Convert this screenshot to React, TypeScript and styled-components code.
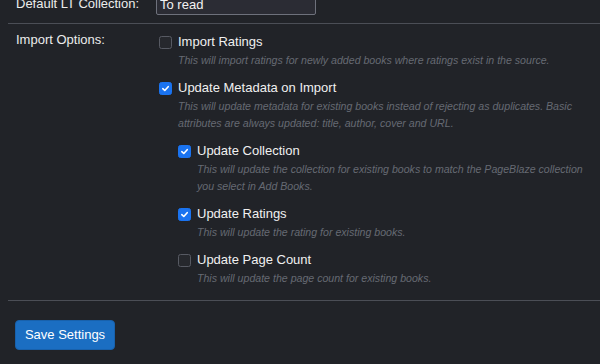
import React, { useState } from "react";
import styled, { createGlobalStyle } from "styled-components";

const Global = createGlobalStyle`
  html, body { margin: 0; padding: 0; background: #212328; overflow: hidden; }
  body { font-family: "Liberation Sans", Arial, sans-serif; color: #ececec; }
  * { box-sizing: border-box; }
`;

const Page = styled.div`
  width: 600px;
  height: 364px;
  overflow: hidden;
  background: #212328;
  padding-left: 8px;
`;

const Scroller = styled.div`
  margin-top: -15px;
`;

const Row = styled.div<{ $center?: boolean }>`
  display: grid;
  grid-template-columns: 140px 1fr;
  align-items: ${(p) => (p.$center ? "center" : "start")};
  padding: 8px 8px 8px 8px;
  border-bottom: 1px solid #4b4e56;
`;

const Label = styled.div`
  font-size: 13px;
  line-height: 16px;
  color: #ececec;
`;

const TextInput = styled.input`
  width: 160px;
  height: 22px;
  padding: 0 3px;
  background: #2b2c34;
  border: 1px solid #6e717c;
  border-radius: 2px;
  color: #f2f2f2;
  font-family: "Liberation Sans", Arial, sans-serif;
  font-size: 13px;
  outline: none;
`;

const Options = styled.div`
  display: flex;
  flex-direction: column;
  gap: 9.5px;
  padding: 0 0 5px 3px;
`;

const Nested = styled.div`
  display: flex;
  flex-direction: column;
  gap: 9.5px;
  padding-left: 19px;
`;

const Option = styled.div`
  display: flex;
  flex-direction: column;
`;

const TitleRow = styled.label`
  display: flex;
  align-items: center;
  gap: 6px;
  font-size: 13px;
  line-height: 20px;
  color: #f0f0f0;
  cursor: pointer;
`;

const Box = styled.span<{ $on: boolean }>`
  width: 13px;
  height: 13px;
  flex: none;
  border-radius: 2.5px;
  display: inline-flex;
  align-items: center;
  justify-content: center;
  background: ${(p) => (p.$on ? "#1a73f0" : "#26282d")};
  border: 1px solid ${(p) => (p.$on ? "#1a73f0" : "#575a63")};
`;

const Desc = styled.div`
  font-size: 10.6px;
  line-height: 16.7px;
  font-style: italic;
  color: #666a73;
  padding-left: 19px;
`;

const Footer = styled.div`
  padding: 19px 7px;
`;

const SaveButton = styled.button`
  width: 100px;
  height: 30px;
  background: #1b6ec2;
  border: 1px solid #1861ac;
  border-radius: 4px;
  color: #ffffff;
  font-family: "Liberation Sans", Arial, sans-serif;
  font-size: 13px;
  cursor: pointer;
`;

function Check({ on }: { on: boolean }) {
  return (
    <Box $on={on}>
      {on && (
        <svg width="9" height="9" viewBox="0 0 10 10">
          <path d="M2 5.2 L4.2 7.2 L8 3" fill="none" stroke="#fff" strokeWidth="1.8" strokeLinecap="round" strokeLinejoin="round" />
        </svg>
      )}
    </Box>
  );
}

function Opt({ title, desc, on, onToggle }: { title: string; desc: string; on: boolean; onToggle: () => void }) {
  return (
    <Option>
      <TitleRow onClick={onToggle}>
        <Check on={on} />
        <span>{title}</span>
      </TitleRow>
      <Desc>{desc}</Desc>
    </Option>
  );
}

export default function App() {
  const [s, setS] = useState({ ratings: false, meta: true, coll: true, urat: true, pages: false });
  const t = (k: keyof typeof s) => () => setS({ ...s, [k]: !s[k] });
  return (
    <Page>
      <Global />
      <Scroller>
        <Row $center>
          <Label>Default LT Collection:</Label>
          <TextInput defaultValue="To read" />
        </Row>
        <Row>
          <Label>Import Options:</Label>
          <Options>
            <Opt title="Import Ratings" on={s.ratings} onToggle={t("ratings")} desc="This will import ratings for newly added books where ratings exist in the source." />
            <Opt title="Update Metadata on Import" on={s.meta} onToggle={t("meta")} desc="This will update metadata for existing books instead of rejecting as duplicates. Basic attributes are always updated: title, author, cover and URL." />
            <Nested>
              <Opt title="Update Collection" on={s.coll} onToggle={t("coll")} desc="This will update the collection for existing books to match the PageBlaze collection you select in Add Books." />
              <Opt title="Update Ratings" on={s.urat} onToggle={t("urat")} desc="This will update the rating for existing books." />
              <Opt title="Update Page Count" on={s.pages} onToggle={t("pages")} desc="This will update the page count for existing books." />
            </Nested>
          </Options>
        </Row>
        <Footer>
          <SaveButton>Save Settings</SaveButton>
        </Footer>
      </Scroller>
    </Page>
  );
}
